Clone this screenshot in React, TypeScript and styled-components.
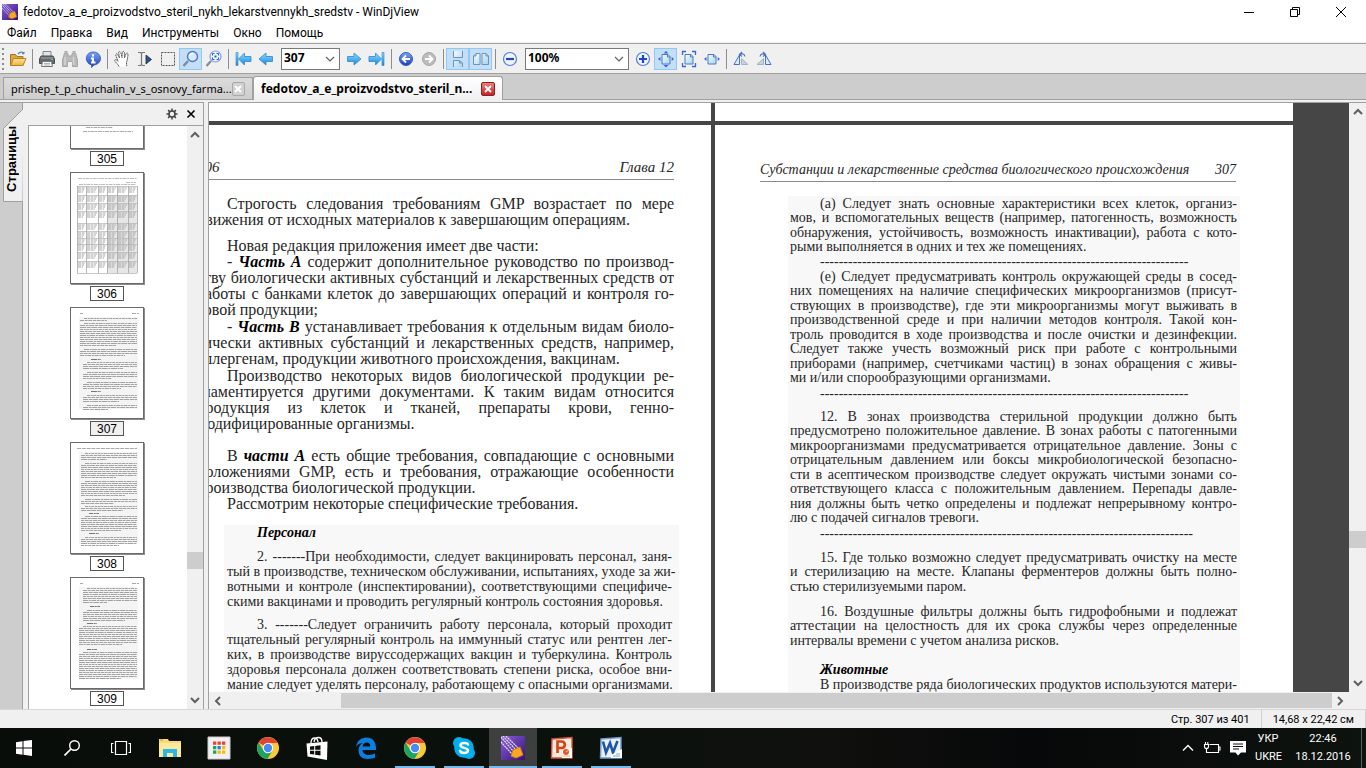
import React from 'react';
import styled, { createGlobalStyle, css } from 'styled-components';

const Global = createGlobalStyle`
  * { box-sizing: border-box; }
  html, body, #root { height: 100%; margin: 0; }
  body { overflow: hidden; font-family: "Noto Sans", "Open Sans", sans-serif; font-size: 12px; color: #000; background: #f0f0f0; }
  button { font: inherit; color: inherit; border: 0; padding: 0; background: none; }
  svg { display: block; flex: none; }
`;

const ui = { face: '#f0f0f0', line: '#a0a0a0', strip: '#cdcdcd', dark: '#464646' };
const uiFont = 'Roboto, "Open Sans", sans-serif';

const Window = styled.div`
  display: flex;
  flex-direction: column;
  height: 100vh;
`;

/* ---------- window chrome ---------- */
const TitleBar = styled.header`
  display: flex;
  align-items: center;
  height: 24px;
  padding: 0 2px;
  background: #fff;
`;
const Title = styled.h1`
  flex: 1;
  margin: 0 0 0 5px;
  font: 400 12px/18px ${uiFont};
`;
const WindowButton = styled.button`
  display: grid;
  place-items: center;
  width: 46px;
  height: 20px;
`;
const MenuBar = styled.nav`
  display: flex;
  height: 18px;
  background: #fff;
`;
const MenuButton = styled.button`
  padding: 0 7px;
  font: 400 12px/17px ${uiFont};
`;

/* ---------- toolbar ---------- */
const ToolBar = styled.div`
  display: flex;
  align-items: center;
  height: 31px;
  margin-top: 1px;
  border-top: 1px solid ${ui.line};
  border-bottom: 1px solid ${ui.line};
  background: ${ui.face};
`;
const Grip = styled.div`
  width: 2px;
  height: 22px;
  margin: 0 2px;
  background: repeating-linear-gradient(#8d8d8d 0 2px, transparent 2px 5px);
`;
const ToolButton = styled.button<{ $on?: boolean }>`
  display: grid;
  place-items: center;
  width: 23px;
  height: 22px;
  ${(p) => p.$on && css`background: #c4def5; border: 1px solid #90c8f6;`}
`;
const Separator = styled.div`
  width: 1px;
  height: 20px;
  margin: 0 2px 0 3px;
  background: #8d8d8d;
`;
const Combo = styled.div<{ $width: number }>`
  display: grid;
  align-items: center;
  width: ${(p) => p.$width}px;
  height: 22px;
  margin: 0 2px 0 4px;
  border: 1px solid #7a7a7a;
  background: #fff;
  > * { grid-area: 1 / 1; }
  svg { justify-self: end; margin-right: 4px; pointer-events: none; }
  select {
    width: 100%;
    height: 20px;
    padding: 0 0 2px 2px;
    border: 0;
    appearance: none;
    background: none;
    color: #000;
    font: 700 12px/18px "Noto Sans", sans-serif;
  }
`;

/* ---------- tabs ---------- */
const TabBar = styled.div`
  display: flex;
  align-items: flex-end;
  height: 26px;
  padding-left: 3px;
  border-bottom: 1px solid ${ui.line};
  background: ${ui.strip};
`;
const Tab = styled.div<{ $active?: boolean }>`
  display: flex;
  align-items: center;
  justify-content: space-between;
  width: 250px;
  height: ${(p) => (p.$active ? 24 : 22)}px;
  margin-bottom: ${(p) => (p.$active ? -1 : 0)}px;
  padding: 0 7px;
  border: 1px solid ${ui.line};
  border-bottom: 0;
  border-radius: ${(p) => (p.$active ? '3px 3px 0 0' : '0')};
  background: ${(p) => (p.$active ? 'linear-gradient(#fff, #f0f0f0)' : 'linear-gradient(#dcdcdc, #cdcdcd)')};
  font-weight: ${(p) => (p.$active ? 700 : 400)};
  font-size: ${(p) => (p.$active ? 12 : 11)}px;
  white-space: nowrap;
`;
const TabClose = styled.button<{ $active?: boolean }>`
  display: grid;
  place-items: center;
  width: 14px;
  height: 14px;
  border: 1px solid ${(p) => (p.$active ? '#8f2020' : '#a8a8a8')};
  border-radius: 2px;
  background: ${(p) => (p.$active ? 'linear-gradient(#e98080, #c32626)' : '#d2d2d2')};
`;

/* ---------- main area ---------- */
const Main = styled.main`
  display: flex;
  flex: 1;
  min-height: 0;
  margin-top: 2px;
`;
const SideStrip = styled.div`
  width: 23px;
  border-top: 1px solid ${ui.line};
  border-right: 1px solid ${ui.line};
  background: ${ui.strip};
`;
const SideTab = styled.button`
  display: grid;
  width: 23px;
  height: 99px;
  > * { grid-area: 1 / 1; }
  span {
    place-self: end center;
    padding: 10px 0 0;
    writing-mode: vertical-rl;
    transform: rotate(180deg);
    font: 700 13px/16px "Liberation Sans", Arial, sans-serif;
  }
`;
const Pane = styled.aside`
  display: flex;
  flex-direction: column;
  width: 181px;
  border-top: 1px solid ${ui.line};
  border-right: 1px solid ${ui.line};
`;
const PaneTools = styled.div`
  display: flex;
  justify-content: flex-end;
  align-items: center;
  gap: 8px;
  height: 22px;
  padding-right: 7px;
`;
const ThumbArea = styled.div`
  display: flex;
  flex: 1;
  min-height: 0;
  margin-left: 5px;
  border: solid ${ui.line};
  border-width: 1px 0 0 1px;
  background: #fff;
`;
const ThumbList = styled.ol`
  display: flex;
  flex: 1;
  flex-direction: column;
  justify-content: flex-end;
  align-items: center;
  gap: 6px;
  margin: 0;
  padding: 0 2px 3px 0;
  overflow: hidden;
  list-style: none;
`;
const ThumbItem = styled.li`
  display: flex;
  flex: none;
  flex-direction: column;
  align-items: center;
  gap: 2px;
`;
const Sheet = styled.div`
  width: 74px;
  height: 112px;
  border: 1px solid #6a6a6a;
  background: #fff;
  box-shadow: 1px 1px 0 #8c8c8c;
`;
const SheetLabel = styled.span<{ $current?: boolean }>`
  width: 34px;
  height: 15px;
  border: 1px solid #555;
  background: ${(p) => (p.$current ? '#f0f0f0' : '#fff')};
  font: 400 12px/14px "Liberation Sans", Arial, sans-serif;
  text-align: center;
`;

/* ---------- scroll bars ---------- */
const VScroll = styled.div<{ $width: number }>`
  display: flex;
  flex-direction: column;
  align-items: center;
  width: ${(p) => p.$width}px;
  padding: 4px 0;
  background: ${ui.face};
`;
const HScroll = styled.div`
  display: flex;
  align-items: center;
  height: 17px;
  padding: 0 21px 0 4px;
  background: ${ui.face};
`;
const Spacer = styled.div<{ $grow: number }>`
  flex: ${(p) => p.$grow} 1 0;
`;
const VThumb = styled.div`
  width: 100%;
  height: 17px;
  background: #cdcdcd;
`;
const HThumb = styled.div`
  flex: 1;
  height: 15px;
  margin: 0 3px 0 118px;
  background: #cdcdcd;
`;

/* ---------- document ---------- */
const Viewer = styled.section`
  display: flex;
  flex: 1;
  flex-direction: column;
  min-width: 0;
  margin-left: 4px;
  border: solid ${ui.line};
  border-width: 1px 0 0 1px;
`;
const ViewRow = styled.div`
  display: flex;
  flex: 1;
  min-height: 0;
`;
const Canvas = styled.div`
  flex: 1;
  min-width: 0;
  overflow: hidden;
  background: ${ui.dark};
`;
const Spread = styled.div`
  display: flex;
  gap: 4px;
  margin: 0 0 4px -76px;
`;
const PageEnd = styled.div`
  flex: none;
  width: 578px;
  height: 18px;
  background: #fff;
`;
const Page = styled.article<{ $side: 'left' | 'right' }>`
  flex: none;
  width: 578px;
  height: 860px;
  padding: ${(p) => (p.$side === 'left' ? '34px 37px 0 64px' : '36px 57px 0 45px')};
  background: #fff;
  color: #262626;
  font-family: "Liberation Serif", "Times New Roman", serif;
`;
const RunningHead = styled.header<{ $size: number }>`
  display: flex;
  justify-content: space-between;
  height: 21px;
  border-bottom: 1px solid #8a8a8a;
  font: italic 400 ${(p) => p.$size}px/17px "Liberation Serif", "Times New Roman", serif;
  span { white-space: nowrap; }
`;
const Body = styled.div`
  padding-top: 16px;
  font-size: 16px;
  line-height: 16px;
`;
const Para = styled.p<{ $gap?: number }>`
  margin: ${(p) => p.$gap ?? 0}px 0 0;
`;
const Line = styled.span<{ $indent?: boolean; $last?: boolean }>`
  display: block;
  padding-left: ${(p) => (p.$indent ? 30 : 0)}px;
  white-space: nowrap;
  text-align: left;
  text-align-last: ${(p) => (p.$last ? 'left' : 'justify')};
  b { font-style: italic; color: #000; }
`;
const Quote = styled.div<{ $side: 'left' | 'right' }>`
  margin: ${(p) => (p.$side === 'left' ? '13px -5px 0 27px' : '14px -4px 0 28px')};
  padding: ${(p) => (p.$side === 'left' ? '0 7px 0 3px' : '0 3px 0 2px')};
  background: #f8f8f8;
  font-size: 14px;
  line-height: 15px;
  ${Line}:nth-child(even) { line-height: ${(p) => (p.$side === 'left' ? 15 : 14)}px; }
`;

/* ---------- status bar ---------- */
const StatusBar = styled.footer`
  display: flex;
  justify-content: flex-end;
  height: 19px;
  border-top: 1px solid #d7d7d7;
  font: 400 11px/20px ${uiFont};
`;
const StatusCell = styled.span`
  padding: 0 11px;
  border-right: 1px solid #d0d0d0;
  white-space: nowrap;
`;

/* ---------- taskbar ---------- */
const TaskBar = styled.footer`
  display: flex;
  height: 40px;
  padding-right: 4px;
  background: linear-gradient(90deg, #080d0a 0%, #0b110d 45%, #10110e 60%, #070809 75%, #0d130f 100%);
  color: #fff;
`;
const TaskButton = styled.button<{ $open?: boolean; $active?: boolean }>`
  display: flex;
  flex-direction: column;
  align-items: center;
  justify-content: center;
  width: 48px;
  height: 40px;
  margin-right: 1px;
  padding-top: ${(p) => (p.$open ? 2 : 0)}px;
  background: ${(p) => (p.$active ? '#3d403e' : 'transparent')};
  &:first-child { margin-right: 0; }
  &::after {
    content: "";
    display: ${(p) => (p.$open ? 'block' : 'none')};
    width: ${(p) => (p.$active ? 48 : 40)}px;
    height: 2px;
    margin-top: auto;
    background: #76b9ed;
  }
  svg { margin-top: ${(p) => (p.$open ? 'auto' : 0)}; }
`;
const Tray = styled.div`
  display: flex;
  align-items: center;
  gap: 9px;
  margin-left: auto;
  padding-right: 5px;
  border-right: 1px solid #5b5f5c;
`;
const TrayText = styled.div<{ $width: number }>`
  width: ${(p) => p.$width}px;
  text-align: center;
  font: 400 11px/18px ${uiFont};
  white-space: nowrap;
  span { display: block; }
`;

/* ---------- icons ---------- */
const Icon = ({ s = 18, children }: { s?: number; children: React.ReactNode }) => (
  <svg width={s} height={s} viewBox={`0 0 ${s} ${s}`} fill="none" aria-hidden="true">{children}</svg>
);

const GradientDefs = styled.svg`
  position: absolute;
`;
const Gradients = () => (
  <GradientDefs width="0" height="0" aria-hidden="true">
    <defs>
      <linearGradient id="sky" x2="0" y2="1"><stop stopColor="#9ad8fb" /><stop offset=".5" stopColor="#4db4f2" /><stop offset="1" stopColor="#1c7fd0" /></linearGradient>
      <linearGradient id="blue" x2="0" y2="1"><stop stopColor="#7ba4f4" /><stop offset="1" stopColor="#1b3fb4" /></linearGradient>
      <linearGradient id="gold" x2="0" y2="1"><stop stopColor="#fde9a0" /><stop offset="1" stopColor="#f0b030" /></linearGradient>
      <linearGradient id="sheet" x2="1" y2="1"><stop stopColor="#f4fbff" /><stop offset="1" stopColor="#a9d4ee" /></linearGradient>
      <linearGradient id="violet" x2="1" y2="1"><stop stopColor="#8a5fd8" /><stop offset="1" stopColor="#35117c" /></linearGradient>
    </defs>
  </GradientDefs>
);

const AppLogo = ({ size }: { size: number }) => (
  <svg width={size} height={size} viewBox="0 0 24 24" aria-hidden="true">
    <path fill="url(#violet)" d="M0 0h24v24H0z" />
    <path d="M0 1l13 15M2 0l13 14M5 0l12 12M0 6l12 13" stroke="#e6e4ee" strokeWidth="1.2" strokeDasharray="2 .6" />
    <path d="M12 14l7-3 3 8-7 3-5-2z" fill="#f8a823" stroke="#d57c10" />
  </svg>
);

const OpenIcon = () => (
  <Icon>
    <path d="M1.500 15.500v-11h5l1.500 2h6v9z" fill="#e0a83c" stroke="#a8771d" />
    <path d="M1.500 15.500l3-7h12.500l-3 7z" fill="url(#gold)" stroke="#b5842a" />
    <path d="M9 4c2-2.500 5-2.500 6-.5V2m0 1.500h-2" stroke="#5f86b4" strokeWidth="1.300" />
  </Icon>
);
const PrintIcon = () => (
  <Icon>
    <path d="M5 1.500h8v5H5z" fill="#dfe6ea" stroke="#7f888c" />
    <path d="M3 6h12l1.500 3v4.500h-15V9z" fill="#66696c" stroke="#4c4f51" />
    <path d="M3 8h12" stroke="#a8acae" />
    <path d="M4.500 11.500h9l1 5h-11z" fill="#f4f8f8" stroke="#777" />
    <path d="M6 13.500h6M6 15h6" stroke="#a3b6bb" /><path d="M13 9.500h2" stroke="#4fd08b" />
  </Icon>
);
const FindIcon = () => (
  <Icon>
    <path d="M3.500 3h3l1 3h3l1-3h3l2 7v6.500h-5v-5h-5v5h-5V10z" fill="#b9b9b9" stroke="#a6a6a6" />
    <path d="M3.500 1.800h3M11.500 1.800h3" stroke="#a9a9a9" strokeWidth="1.600" />
    <path d="M4 7v8M12.500 7v8" stroke="#d4d4d4" strokeWidth="1.500" />
  </Icon>
);
const InfoIcon = () => (
  <Icon>
    <path d="M9 2a7 6.500 0 1 1 1 13l-2.500 2.500.2-2.600A6.500 6.500 0 0 1 9 2z" fill="url(#blue)" stroke="#2d50b8" strokeWidth=".8" />
    <path d="M9 4.200v2.300M7 8.500h2v4M7 12.500h4.500" stroke="#fff" strokeWidth="2" />
  </Icon>
);
const HandIcon = () => (
  <Icon>
    <path d="M6 16.500c-1-2.500-4-4.500-4.300-6 .3-1.500 2-1 3.300.8L2.700 5c0-1.500 1.600-1.600 2.100-.3L6.500 8 5.600 2.700c.2-1.500 1.800-1.400 2.200 0L9 7.500l.3-5.300c.5-1.200 1.900-1 2.100.3l.1 5.300 1.600-4.200c.8-1 2-.5 1.900.7-.3 3.500-.7 5.500-1.500 8.200l.2 4" fill="#fff" stroke="#555" strokeDasharray="1.600 .5" />
  </Icon>
);
const TextSelectIcon = () => (
  <Icon>
    <path d="M2 2.500h2.500l1 1 1-1H9M2 15.500h2.500l1-1 1 1H9M5.500 3v12" stroke="#777" strokeWidth="1.200" />
    <path d="M10 5v9l5.500-4.500z" fill="#2f5184" stroke="#1b3051" strokeWidth=".8" />
  </Icon>
);
const MarqueeIcon = () => (<Icon><path d="M2.500 2.500h13v13h-13z" stroke="#555" strokeDasharray="2 1" /></Icon>);
const LensIcon = () => (
  <Icon>
    <path d="M6 11l-4.500 5" stroke="#7d8ca8" strokeWidth="2.500" />
    <circle cx="10.500" cy="6.500" r="5" fill="#d4ebfb" stroke="#4c79cf" strokeWidth="1.400" />
    <path d="M7.500 6c.5-2 2-2.500 3.500-2.500" stroke="#fff" strokeWidth="1.400" />
  </Icon>
);
const LensFitIcon = () => (
  <Icon>
    <path d="M6 11l-4.500 5" stroke="#7d8ca8" strokeWidth="2.200" />
    <circle cx="10.500" cy="6.500" r="5.500" fill="#f2f8ff" stroke="#7f9fe0" strokeWidth="1.200" />
    <path d="M7.500 5.500v-2h2M11.500 3.500h2v2M13.500 7.500v2h-2M9.500 9.500h-2v-2" stroke="#2456d8" />
    <path d="M9.500 5.500h2v2h-2z" fill="#2456d8" />
  </Icon>
);
const ArrowIcon = ({ flip, stop }: { flip?: boolean; stop?: boolean }) => (
  <Icon>
    <g transform={flip ? 'matrix(-1 0 0 1 18 0)' : undefined}>
      <path d={stop ? 'M1 6.500h6.500V3l6 6-6 6v-3.500H1z' : 'M2.500 6.500H9V3l7 6-7 6v-3.500H2.500z'} fill="url(#sky)" stroke="#3f8fce" strokeWidth=".9" />
      {stop && <path d="M14 2.500h2v13h-2z" fill="url(#sky)" stroke="#3f8fce" strokeWidth=".7" />}
    </g>
  </Icon>
);
const HistoryIcon = ({ forward }: { forward?: boolean }) => (
  <Icon>
    <circle cx="9" cy="9" r="6.500" fill={forward ? '#bcbcbc' : 'url(#blue)'} stroke={forward ? '#a4a4a4' : '#345bc4'} />
    <path d={forward ? 'M5 9h7M9 5.500L12.500 9 9 12.500' : 'M13 9H6M9 5.500L5.500 9 9 12.500'} stroke="#fff" strokeWidth="1.800" />
  </Icon>
);
const ContinuousIcon = () => (
  <Icon>
    <path d="M4.500 1v6.500h9V1M4.500 17v-6.500h6l3 2.500v4" fill="url(#sheet)" stroke="#6d93bd" />
    <path d="M10.500 10.500V13h3" stroke="#6d93bd" />
  </Icon>
);
const FacingIcon = () => (
  <Icon>
    <path d="M1.500 14.500V6l2.500-2.500h4v11zM10 14.500v-11h4L16.500 6v8.500z" fill="url(#sheet)" stroke="#6d93bd" />
    <path d="M4 3.500V6H1.500M14 3.500V6h2.500" stroke="#6d93bd" />
  </Icon>
);
const ZoomSignIcon = ({ plus }: { plus?: boolean }) => (
  <Icon>
    <circle cx="9" cy="9" r="6.500" fill="#eef4ff" stroke="#5a7ed0" strokeWidth="1.200" />
    <path d={plus ? 'M5 9h8M9 5v8' : 'M5 9h8'} stroke="#2349b8" strokeWidth="2.200" />
  </Icon>
);
const FitIcon = ({ kind }: { kind: 'page' | 'window' | 'width' }) => (
  <Icon>
    <path d="M5 4.500h6l2 2v7.500H5z" fill="url(#sheet)" stroke="#5078c0" />
    <path d="M10.500 4.500V7H13" stroke="#5078c0" />
    {kind !== 'window' && <path d="M3.500 7v4l-2.500-2zM14.700 7v4L17 9z" fill="#3565dd" />}
    {kind === 'page' && <path d="M6.500 3.500h5L9 1zM6.500 15h5L9 17.500z" fill="#3565dd" />}
    {kind === 'window' && <path d="M2.500 5V1.500H6M12 1.500h3.500V5M15.500 13v3.500H12M6 16.500H2.500V13" stroke="#3565dd" strokeWidth="1.300" />}
  </Icon>
);
const RotateIcon = ({ flip }: { flip?: boolean }) => (
  <Icon>
    <g transform={flip ? 'matrix(-1 0 0 1 18 0)' : undefined}>
      <path d="M2 14.500h5.500V5z" fill="#dcecff" stroke="#4a70c4" />
      <path d="M9.500 14.500V8.500l6.500 6z" fill="#c4d2dc" stroke="#a5b4c0" />
      <path d="M8 4.500c2-1.500 4.500-.5 5 2M10 2L7.500 4.500 10 6.500" stroke="#4a70c4" strokeWidth="1.200" />
    </g>
  </Icon>
);
const Chevron = ({ d = 'M1 3l4 4 4-4', w = 1.2 }: { d?: string; w?: number }) => (
  <Icon s={10}><path d={d} stroke="#606060" strokeWidth={w} /></Icon>
);
const up = 'M1 7l4-4 4 4';
const down = 'M1 3l4 4 4-4';
const left = 'M7 1L3 5l4 4';
const right = 'M3 1l4 4-4 4';

const ChromeIcon = () => (
  <Icon s={24}>
    <circle cx="12" cy="12" r="11" fill="#fbc936" />
    <path d="M12 12L2.500 6.500A11 11 0 0 1 21.600 7H12z" fill="#db4437" />
    <path d="M2.500 6.500A11 11 0 0 0 11.500 23l5-8.500L12 12 7.500 14.500z" fill="#1da362" />
    <circle cx="12" cy="12" r="5.200" fill="#fff" /><circle cx="12" cy="12" r="4.200" fill="#4a8af4" />
  </Icon>
);

/* ---------- page thumbnails ---------- */
/* paragraphs of each page: [first y, number of rows, left edge] */
const paragraphs: Record<number, [number, number, number][]> = {
  307: [[10, 2, 9], [15, 12, 9], [41, 4, 9], [51, 1, 16], [54, 4, 12], [64, 4, 12], [74, 4, 12], [83, 1, 16], [87, 4, 12], [97, 3, 12]],
  308: [[10, 4, 10], [20, 8, 10], [38, 8, 10], [56, 3, 10], [63, 3, 10], [70, 1, 14], [73, 8, 10], [90, 1, 14], [94, 5, 10]],
  309: [[10, 8, 12], [28, 1, 15], [32, 6, 12], [45, 1, 12], [48, 10, 8], [71, 1, 12], [74, 14, 8]],
};
const Paragraphs = ({ page }: { page: number }) => (
  <>
    {(paragraphs[page] ?? []).map(([y, count, x], p) =>
      Array.from({ length: count }, (_, i) => {
        const end = count === 1 ? x + 14 : i === count - 1 ? 36 + ((p * 9) % 20) : 66;
        return (
          <path key={`${p}-${i}`} d={`M${i === 0 ? x + 4 : x} ${y + i * 2}.500H${end}`} stroke={count === 1 ? '#777' : '#a2a2a2'} strokeDasharray={`${3 + ((i + p) % 4)} .7 ${2 + (i % 3)} .6`} />
        );
      })
    )}
  </>
);
const cols = [6, 15, 27, 36, 46, 57, 66];
const rowsY = [13, 22, 30, 38, 50, 58, 65, 71, 79, 88, 100];
const Miniature = ({ page }: { page: number }) => (
  <svg width="72" height="110" viewBox="0 0 72 110" fill="none" aria-hidden="true">
    {page === 305 && <path d="M15 63.500H42M12 67.500H62" stroke="#aaa" strokeDasharray="4 .7 2 .7" transform="translate(0 26)" />}
    {page === 306 && (
      <g>
        <path d="M36 22h30v78H36z" fill="#e6e6e6" />
        <path d="M7 5.500H66M55 9.500h10M8 11.500H65" stroke="#bbb" strokeDasharray="4 .8 2 .6" />
        {rowsY.slice(0, -1).map((y, r) => cols.slice(0, -1).map((x, c) => (
          <path key={`${r}-${c}`} d={`M${x + 1} ${y + 2}H${cols[c + 1] - 1}M${x + 1} ${y + 4}H${cols[c + 1] - 2}M${x + 1} ${y + 6}H${cols[c + 1] - 3}`} stroke="#a5a5a5" strokeDasharray="3 .6" />
        )))}
        {rowsY.map((y) => <path key={y} d={`M6 ${y}.500H66`} stroke="#b0b0b0" strokeWidth=".7" />)}
        {cols.map((x) => <path key={x} d={`M${x}.500 13V100`} stroke="#9a9a9a" strokeWidth=".7" />)}
      </g>
    )}
    {page > 306 && (
      <g>
        <path d="M8 9h59v92H8z" fill="#f4f4f4" />
        <path d={page === 308 ? 'M6 5.500H66' : 'M9 5.500h3M61 5.500h7'} stroke="#aaa" strokeDasharray="4 .8" />
        <Paragraphs page={page} />
      </g>
    )}
  </svg>
);

/* ---------- document text ---------- */
type Block = { gap?: number; lines: React.ReactNode[]; full?: boolean };

const Blocks = ({ items }: { items: Block[] }) => (
  <>
    {items.map((b, i) => (
      <Para key={i} $gap={b.gap}>
        {b.lines.map((l, j) => (
          <Line key={j} $indent={j === 0} $last={j === b.lines.length - 1 && !b.full}>{l}</Line>
        ))}
      </Para>
    ))}
  </>
);

const leftBody: Block[] = [
  { lines: ['Строгость следования требованиям GMP возрастает по мере', 'движения от исходных материалов к завершающим операциям.'] },
  { gap: 10, lines: ['Новая редакция приложения имеет две части:'] },
  { lines: [<>- <b>Часть А</b> содержит дополнительное руководство по производ-</>, 'ству биологически активных субстанций и лекарственных средств от', 'работы с банками клеток до завершающих операций и контроля го-', 'товой продукции;'] },
  { gap: 1, lines: [<>- <b>Часть В</b> устанавливает требования к отдельным видам биоло-</>, 'гически активных субстанций и лекарственных средств, например,', 'аллергенам, продукции животного происхождения, вакцинам.'] },
  { gap: 1, lines: ['Производство некоторых видов биологической продукции ре-', 'гламентируется другими документами. К таким видам относится', 'продукция из клеток и тканей, препараты крови, генно-', 'модифицированные организмы.'] },
  { gap: 16, lines: [<>В <b>части А</b> есть общие требования, совпадающие с основными</>, 'положениями GMP, есть и требования, отражающие особенности', 'производства биологической продукции.'] },
  { lines: ['Рассмотрим некоторые специфические требования.'] },
];
const leftQuote: Block[] = [
  { lines: [<b>Персонал</b>] },
  { gap: 9, lines: ['2. -------При необходимости, следует вакцинировать персонал, заня-', 'тый в производстве, техническом обслуживании, испытаниях, уходе за жи-', 'вотными и контроле (инспектировании), соответствующими специфиче-', 'скими вакцинами и проводить регулярный контроль состояния здоровья.'] },
  { gap: 8, lines: ['3. -------Следует ограничить работу персонала, который проходит', 'тщательный регулярный контроль на иммунный статус или рентген лег-', 'ких, в производстве вируссодержащих вакцин и туберкулина. Контроль', 'здоровья персонала должен соответствовать степени риска, особое вни-', 'мание следует уделять персоналу, работающему с опасными организмами.'] },
];
const dashes = '-'.repeat(79);
const rightQuote: Block[] = [
  { lines: ['(а) Следует знать основные характеристики всех клеток, организ-', 'мов, и вспомогательных веществ (например, патогенность, возможность', 'обнаружения, устойчивость, возможность инактивации), работа с кото-', 'рыми выполняется в одних и тех же помещениях.'] },
  { lines: [dashes] },
  { lines: ['(е) Следует предусматривать контроль окружающей среды в сосед-', 'них помещениях на наличие специфических микроорганизмов (присут-', 'ствующих в производстве), где эти микроорганизмы могут выживать в', 'производственной среде и при наличии методов контроля. Такой кон-', 'троль проводится в ходе производства и после очистки и дезинфекции.', 'Следует также учесть возможный риск при работе с контрольными', 'приборами (например, счетчиками частиц) в зонах обращения с живы-', 'ми и/или спорообразующими организмами.'] },
  { gap: 1, lines: [dashes] },
  { gap: 8, lines: ['12. В зонах производства стерильной продукции должно быть', 'предусмотрено положительное давление. В зонах работы с патогенными', 'микроорганизмами предусматривается отрицательное давление. Зоны с', 'отрицательным давлением или боксы микробиологической безопасно-', 'сти в асептическом производстве следует окружать чистыми зонами со-', 'ответствующего класса с положительным давлением. Перепады давле-', 'ния должны быть четко определены и подлежат непрерывному контро-', 'лю с подачей сигналов тревоги.'] },
  { gap: 1, lines: [`${dashes}-`] },
  { gap: 9, lines: ['15. Где только возможно следует предусматривать очистку на месте', 'и стерилизацию на месте. Клапаны ферментеров должны быть полно-', 'стью стерилизуемыми паром.'] },
  { gap: 10, lines: ['16. Воздушные фильтры должны быть гидрофобными и подлежат', 'аттестации на целостность для их срока службы через определенные', 'интервалы времени с учетом анализа рисков.'] },
  { gap: 14, lines: [<b>Животные</b>] },
  { full: true, lines: ['В производстве ряда биологических продуктов используются матери-'] },
];

const tools = (items: [string, React.ReactNode, boolean?][]) =>
  items.map(([label, icon, on]) => <ToolButton key={label} aria-label={label} $on={on}>{icon}</ToolButton>);

export default function App() {
  return (
    <Window>
      <Global />
      <Gradients />
      <TitleBar>
        <AppLogo size={16} />
        <Title>fedotov_a_e_proizvodstvo_steril_nykh_lekarstvennykh_sredstv - WinDjView</Title>
        <WindowButton aria-label="Свернуть"><Icon s={10}><path d="M0 5.500h10" stroke="#000" /></Icon></WindowButton>
        <WindowButton aria-label="Восстановить"><Icon s={10}><path d="M.5 2.500h7v7h-7zM2.500 2.500v-2h7v7h-2" stroke="#000" /></Icon></WindowButton>
        <WindowButton aria-label="Закрыть"><Icon s={10}><path d="M0 0l10 10M10 0L0 10" stroke="#000" /></Icon></WindowButton>
      </TitleBar>
      <MenuBar>
        {['Файл', 'Правка', 'Вид', 'Инструменты', 'Окно', 'Помощь'].map((m) => <MenuButton key={m}>{m}</MenuButton>)}
      </MenuBar>

      <ToolBar>
        <Grip />
        {tools([['Открыть', <OpenIcon />]])}
        <Separator />
        {tools([['Печать', <PrintIcon />], ['Найти', <FindIcon />], ['Сведения', <InfoIcon />]])}
        <Separator />
        {tools([['Рука', <HandIcon />], ['Выделение текста', <TextSelectIcon />], ['Выделение области', <MarqueeIcon />], ['Лупа', <LensIcon />, true], ['Масштаб области', <LensFitIcon />]])}
        <Separator />
        {tools([['Первая страница', <ArrowIcon flip stop />], ['Предыдущая страница', <ArrowIcon flip />]])}
        <Combo $width={59}>
          <select aria-label="Страница" defaultValue="307"><option>307</option></select>
          <Chevron />
        </Combo>
        {tools([['Следующая страница', <ArrowIcon />], ['Последняя страница', <ArrowIcon stop />]])}
        <Separator />
        {tools([['Назад', <HistoryIcon />], ['Вперёд', <HistoryIcon forward />]])}
        <Separator />
        {tools([['Непрерывно', <ContinuousIcon />, true], ['Разворот', <FacingIcon />, true]])}
        <Separator />
        {tools([['Уменьшить', <ZoomSignIcon />]])}
        <Combo $width={104}>
          <select aria-label="Масштаб" defaultValue="100%"><option>100%</option></select>
          <Chevron />
        </Combo>
        {tools([['Увеличить', <ZoomSignIcon plus />], ['Реальный размер', <FitIcon kind="page" />, true], ['По размеру окна', <FitIcon kind="window" />], ['По ширине', <FitIcon kind="width" />]])}
        <Separator />
        {tools([['Повернуть влево', <RotateIcon />], ['Повернуть вправо', <RotateIcon flip />]])}
      </ToolBar>

      <TabBar>
        <Tab>
          <span>prishep_t_p_chuchalin_v_s_osnovy_farma...</span>
          <TabClose aria-label="Закрыть вкладку"><Icon s={8}><path d="M1 1l6 6M7 1L1 7" stroke="#fff" strokeWidth="1.800" /></Icon></TabClose>
        </Tab>
        <Tab $active>
          <span>fedotov_a_e_proizvodstvo_steril_n...</span>
          <TabClose $active aria-label="Закрыть вкладку"><Icon s={8}><path d="M1 1l6 6M7 1L1 7" stroke="#fff" strokeWidth="1.800" /></Icon></TabClose>
        </Tab>
      </TabBar>

      <Main>
        <SideStrip>
          <SideTab>
            <svg width="23" height="99" viewBox="0 0 23 99" aria-hidden="true">
              <path d="M23.500 -1V5.500L3.500 25.500V98.500H22.500" fill="#f0f0f0" stroke="#a0a0a0" />
            </svg>
            <span>Страницы</span>
          </SideTab>
        </SideStrip>
        <Pane>
          <PaneTools>
            <button aria-label="Параметры">
              <Icon s={12}><circle cx="6" cy="6" r="3" stroke="#444" strokeWidth="1.600" /><path d="M6 .5V3M6 9v2.500M.5 6H3M9 6h2.500M2.100 2.100l1.800 1.800M8.100 8.100l1.800 1.800M9.900 2.100L8.100 3.900M3.900 8.100L2.100 9.900" stroke="#444" strokeWidth="1.500" /></Icon>
            </button>
            <button aria-label="Закрыть панель"><Icon s={10}><path d="M1.500 1.500l7 7M8.500 1.500l-7 7" stroke="#000" strokeWidth="1.600" /></Icon></button>
          </PaneTools>
          <ThumbArea>
            <ThumbList>
              {[305, 306, 307, 308, 309].map((n) => (
                <ThumbItem key={n}>
                  <Sheet><Miniature page={n} /></Sheet>
                  <SheetLabel $current={n === 307}>{n}</SheetLabel>
                </ThumbItem>
              ))}
            </ThumbList>
            <VScroll $width={16}>
              <Chevron d={up} w={2} />
              <Spacer $grow={412} />
              <VThumb />
              <Spacer $grow={126} />
              <Chevron d={down} w={2} />
            </VScroll>
          </ThumbArea>
        </Pane>

        <Viewer>
          <ViewRow>
            <Canvas>
              <Spread><PageEnd /><PageEnd /></Spread>
              <Spread>
                <Page $side="left">
                  <RunningHead $size={15}><span>306</span><span>Глава 12</span></RunningHead>
                  <Body><Blocks items={leftBody} /></Body>
                  <Quote $side="left"><Blocks items={leftQuote} /></Quote>
                </Page>
                <Page $side="right">
                  <RunningHead $size={14}><span>Субстанции и лекарственные средства биологического происхождения</span><span>307</span></RunningHead>
                  <Quote $side="right"><Blocks items={rightQuote} /></Quote>
                </Page>
              </Spread>
            </Canvas>
            <VScroll $width={17}>
              <Chevron d={up} w={2} />
              <Spacer $grow={414} />
              <VThumb />
              <Spacer $grow={130} />
              <Chevron d={down} w={2} />
            </VScroll>
          </ViewRow>
          <HScroll>
            <Chevron d={left} w={2} />
            <HThumb />
            <Chevron d={right} w={2} />
          </HScroll>
        </Viewer>
      </Main>

      <StatusBar>
        <StatusCell>Стр. 307 из 401</StatusCell>
        <StatusCell>14,68 x 22,42 см</StatusCell>
      </StatusBar>

      <TaskBar>
        <TaskButton aria-label="Пуск"><Icon s={16}><path d="M0 2.200L6.500 1.300V7.500H0zM7.500 1.100L16 0v7.500H7.500zM0 8.500h6.500v6.200L0 13.800zM7.500 8.500H16V16l-8.500-1.200z" fill="#fff" /></Icon></TaskButton>
        <TaskButton aria-label="Поиск"><Icon s={16}><circle cx="10.500" cy="5.500" r="4.800" stroke="#fff" strokeWidth="1.400" /><path d="M7 9L.5 15.500" stroke="#fff" strokeWidth="1.700" /></Icon></TaskButton>
        <TaskButton aria-label="Представление задач"><Icon s={20}><path d="M4.500 3.500h11v13h-11zM2.500 5.500H.5v9h2M17.500 5.500h2v9h-2" stroke="#fff" strokeWidth="1.200" /></Icon></TaskButton>
        <TaskButton aria-label="Проводник">
          <Icon s={24}><path d="M1 3h9l1 2h12v16H1z" fill="#f8d975" /><path d="M1 7h22v14H1z" fill="#fde99c" /><path d="M5 13h14v8h-4v-4H9v4H5z" fill="#29b6ea" /><path d="M2 4h3" stroke="#d79c2e" /></Icon>
        </TaskButton>
        <TaskButton aria-label="Приложения">
          <Icon s={24}>
            <path d="M1 1h22v22H1z" fill="#f1f1f1" stroke="#ccc" />
            {['#ea4335', '#ea4335', '#ea4335', '#1da362', '#2f7de1', '#fbbc05', '#1da362', '#fbbc05', '#fbbc05'].map((c, i) => (
              <rect key={i} x={6 + (i % 3) * 4.500} y={5.500 + Math.floor(i / 3) * 4.500} width="3.300" height="3.300" fill={c} />
            ))}
          </Icon>
        </TaskButton>
        <TaskButton aria-label="Chrome"><ChromeIcon /></TaskButton>
        <TaskButton aria-label="Магазин">
          <Icon s={24}><path d="M1.500 7.500L22.500 5.500 22 24 2.500 20.500z" fill="#fff" /><path d="M6 7c0-6 6-7 7-1M9 6c1-6 8-6 8 0" stroke="#fff" strokeWidth="1.300" /><path d="M5 10.500l4.200-.5v3.800H5zM10.200 9.900l5.300-.6v4.500h-5.300zM5 14.800h4.200v3.800L5 18zM10.200 14.800h5.300v4.600l-5.300-.7z" fill="#0a0f0c" /></Icon>
        </TaskButton>
        <TaskButton aria-label="Edge">
          <Icon s={22}><path d="M1 10C2 4 6 .500 11.500.500c6.500 0 9.500 5 9.500 10.500v2H7.500c.2 3.500 3 5 6.500 5 2.300 0 4.300-.7 6-1.700v4.300c-2 1-4.300 1.400-7 1.400-6 0-9.500-3.500-9.500-8.500C3.500 10 5 7.500 8 6 4.800 6 2.500 7.500 1 10zm6.600-.5h7.600c0-2.500-1-4-3.500-4S7.900 7.300 7.600 9.500z" fill="#0a7fe0" /></Icon>
        </TaskButton>
        <TaskButton $open aria-label="Chrome — открыто"><ChromeIcon /></TaskButton>
        <TaskButton $open aria-label="Skype">
          <Icon s={24}>
            <circle cx="12" cy="12" r="9.800" fill="#00aff0" /><circle cx="7" cy="7" r="6" fill="#00aff0" /><circle cx="17" cy="17" r="6" fill="#00aff0" />
            <path d="M16 8.500C15.500 6.500 8.500 6 8.500 9.300c0 3.400 7.500 1.700 7.500 5.200 0 3.600-7.500 3-8 .3" stroke="#fff" strokeWidth="2.500" strokeLinecap="round" />
          </Icon>
        </TaskButton>
        <TaskButton $open $active aria-label="WinDjView"><AppLogo size={24} /></TaskButton>
        <TaskButton $open aria-label="PowerPoint">
          <Icon s={24}><path d="M2 3l20-1.500V22H1.500z" fill="#fbe9e0" stroke="#d9552b" strokeWidth="1.400" /><path d="M7.500 17V5.500h3.800c4.700 0 4.700 6.500 0 6.500H7.500" stroke="#cf4518" strokeWidth="2.600" /><path d="M12 15l10-3v10H12z" fill="#fff" /><circle cx="16" cy="16" r="3" fill="#e0592a" /><path d="M16 16l3-2M12 20h8" stroke="#f4a582" strokeWidth="1.200" /></Icon>
        </TaskButton>
        <TaskButton $open aria-label="Word">
          <Icon s={24}><path d="M2 3l20-1.500V22H1.500z" fill="#e8f1fb" stroke="#6d9bd3" strokeWidth="1.400" /><path d="M4 5.500L7 16.500 11 7l3 9.500L18.500 5" stroke="#1f55a5" strokeWidth="2.600" /><path d="M12 19l11-6v9H12z" fill="#fff" /><path d="M14 20h7M17 18h4" stroke="#79a7dc" /></Icon>
        </TaskButton>
        <Tray>
          <Icon s={12}><path d="M1 8.500l5-5 5 5" stroke="#fff" strokeWidth="1.400" /></Icon>
          <Icon s={18}><path d="M6.500 5.500h9v8h-9M15.500 8h1.500v3h-1.500M3.500 9.500v4h4M1.500 5.500h4v2a2 2 0 0 1-4 0zM2.500 3v2M4.800 3v2" stroke="#fff" strokeWidth="1.100" /></Icon>
          <Icon s={16}><path d="M0 1h16v11.500h-5L8 15.500 5.500 12.500H0z" fill="#fff" /><path d="M3 4h10M3 6.500h10M3 9h6" stroke="#111" /></Icon>
          <TrayText $width={26}><span>УКР</span><span>UKRE</span></TrayText>
          <TrayText $width={66}><span>22:46</span><span>18.12.2016</span></TrayText>
        </Tray>
      </TaskBar>
    </Window>
  );
}
